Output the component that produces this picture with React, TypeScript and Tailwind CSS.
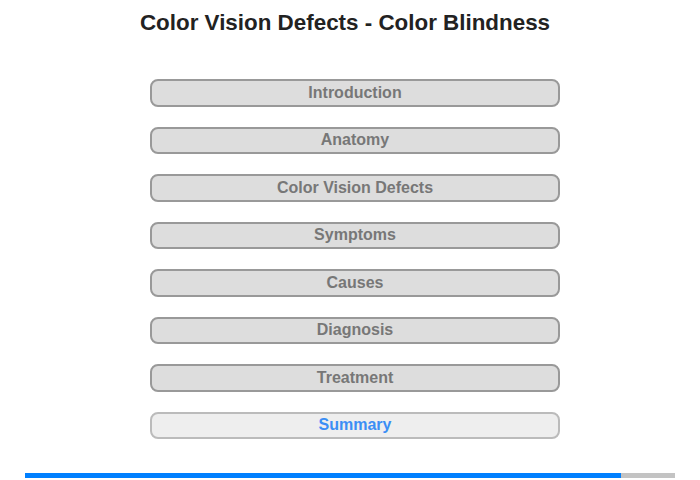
const sections = [
  "Introduction",
  "Anatomy",
  "Color Vision Defects",
  "Symptoms",
  "Causes",
  "Diagnosis",
  "Treatment",
];

const App = () => {
  return (
    <div className="w-[700px] h-[480px] bg-white font-['Liberation_Sans',Arial,sans-serif]">
      <div className="pt-[11px] pr-[10px] h-[24px] box-content">
        <h1 className="text-center text-[22.4px] leading-[24px] font-bold text-[#222]">
          Color Vision Defects - Color Blindness
        </h1>
      </div>
      <div className="mt-[44px] flex flex-col items-center gap-[20px] pl-[10px]">
        {sections.map((s) => (
          <div
            key={s}
            className="w-[410px] h-[27.5px] flex items-center justify-center rounded-[8px] border-2 border-[#999] bg-[#ddd] text-[16px] font-bold text-[#777]"
          >
            {s}
          </div>
        ))}
        <div className="w-[410px] h-[27.5px] flex items-center justify-center rounded-[8px] border-2 border-[#bbb] bg-[#eee] text-[16px] font-bold text-[#3b8ef5]">
          Summary
        </div>
      </div>
      <div className="mt-[34px] mx-[25px] h-[5px] flex bg-[#c3c3c3]">
        <div className="w-[596px] h-full bg-[#0080ff]" />
      </div>
    </div>
  );
};

export default App;
